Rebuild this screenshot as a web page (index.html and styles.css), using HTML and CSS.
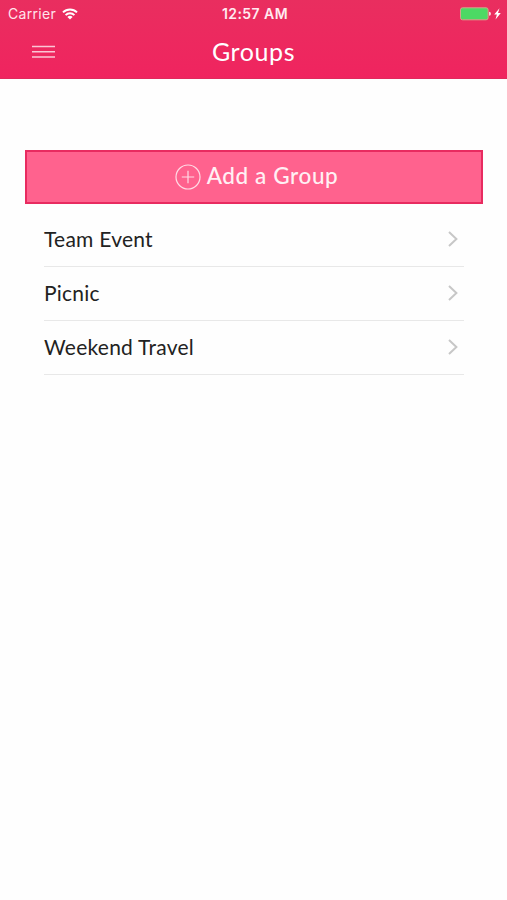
FILE: index.html
```html
<!DOCTYPE html>
<html lang="en">
<head>
<meta charset="utf-8">
<title>Groups</title>
<link rel="stylesheet" href="styles.css">
</head>
<body>
<header class="header">
  <div class="status">
    <div class="carrier"><span class="carrier-name">Carrier</span>
      <svg class="wifi" width="16" height="12" viewBox="0 0 16 12" fill="none" stroke="#fff" stroke-width="2"><path d="M1 4.4a10 10 0 0 1 14 0M3.6 7.1a6.2 6.2 0 0 1 8.8 0"/><path d="M8 11.6 5.4 9a3.7 3.7 0 0 1 5.2 0z" fill="#fff" stroke="none"/></svg>
    </div>
    <div class="time">12:57 AM</div>
    <div class="power">
      <svg width="42" height="14" viewBox="0 0 42 14"><rect x=".5" y=".8" width="27.6" height="12" rx="2" fill="#4cd964" stroke="#d9a08c"/><path d="M29 4.8a2 2 0 0 1 0 4z" fill="#fbd5df"/><path d="m39.5 1.2-5.3 6.2h2.7l-1.4 5.2 5.3-6.6H38z" fill="#fff"/></svg>
    </div>
  </div>
  <nav class="nav">
    <svg class="menu" width="23" height="14" viewBox="0 0 23 14" stroke="#fbc6d5" stroke-width="1.4"><path d="M0 1.5h23M0 6.7h23M0 12h23"/></svg>
    <h1 class="title">Groups</h1>
  </nav>
</header>
<main class="content">
  <button class="add">
    <svg width="26" height="26" viewBox="0 0 26 26" fill="none" stroke="#ffdbe5" stroke-width="1.2"><circle cx="13" cy="13" r="12"/><path d="M13 6.8v12.4M6.8 13h12.4"/></svg>
    <span class="add-label">Add a Group</span>
  </button>
  <ul class="list">
    <li class="row"><span class="name">Team Event</span><svg class="chevron" width="12" height="18" viewBox="0 0 12 18"><path d="m2 2 7.4 7L2 16"/></svg></li>
    <li class="row"><span class="name">Picnic</span><svg class="chevron" width="12" height="18" viewBox="0 0 12 18"><path d="m2 2 7.4 7L2 16"/></svg></li>
    <li class="row"><span class="name">Weekend Travel</span><svg class="chevron" width="12" height="18" viewBox="0 0 12 18"><path d="m2 2 7.4 7L2 16"/></svg></li>
  </ul>
</main>
</body>
</html>
```
FILE: styles.css
```css
* { box-sizing: border-box; }
body { margin: 0; min-height: 900px; background: #fefefe; color: #222; font-family: Lato, sans-serif; }
.header { height: 79px; background: linear-gradient(#e92e5f, #f0245f); border-bottom: 1px solid #e02a5c; color: #fff; }
.status { display: grid; grid-template-columns: 1fr auto 1fr; height: 27px; align-items: center; padding: 0 5px 0 8px; font-family: Inter, sans-serif; font-size: 14px; }
.carrier { display: flex; align-items: center; gap: 6px; color: #ffe4ec; letter-spacing: .3px; }
.time { font-weight: 600; color: #ffeaf0; letter-spacing: .45px; }
.power { display: flex; justify-content: flex-end; }
.nav { display: grid; grid-template-columns: 1fr auto 1fr; align-items: center; height: 50px; }
.menu { margin-left: 32px; }
.title { margin: 0; padding-bottom: 2px; font-size: 25px; font-weight: 400; letter-spacing: .6px; line-height: 30px; }
.content { padding: 71px 24px 0 25px; }
.add { display: flex; align-items: center; justify-content: center; gap: 6px; width: 100%; height: 54px; padding: 0 0 0 5px; background: #ff628e; border: 2px solid #e82b60; color: #fff0f4; font: 500 22.5px/28px Lato, sans-serif; letter-spacing: .6px; }
.add-label { padding-bottom: 2px; }
.list { list-style: none; margin: 9px 19px 0; padding: 0; }
.row { display: flex; align-items: center; justify-content: space-between; height: 54px; padding: 0 5px 1px 0; border-bottom: 1px solid #e8e8e8; font-size: 21px; letter-spacing: .25px; }
.name { padding-bottom: 1px; }
.chevron { fill: none; stroke: #c7c7c7; stroke-width: 2; }
```
